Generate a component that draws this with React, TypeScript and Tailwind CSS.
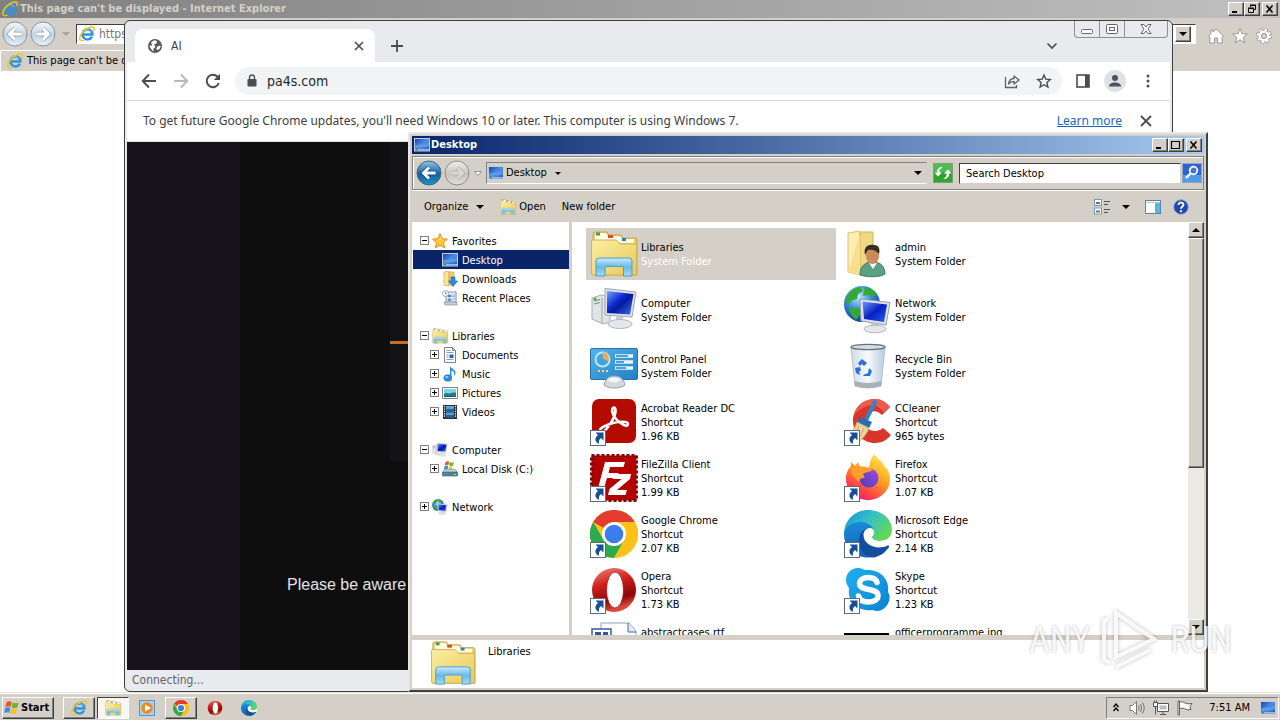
import type { ReactNode } from "react";

const tahoma = "font-[family-name:'DejaVu_Sans_Condensed','Noto_Sans',sans-serif]";
const raised =
  "border border-t-white border-l-white border-r-[#404040] border-b-[#404040] bg-[#d4d0c8] shadow-[inset_-1px_-1px_0_#808080]";

/* ---------- small icons ---------- */

function IeIcon({ className }: { className: string }) {
  return (
    <svg viewBox="0 0 16 16" className={className} aria-hidden="true">
      <path d="M12.9 10.6A5 5 0 1 1 13.4 8.6H4.2" fill="none" stroke="#2f93dc" strokeWidth="2.5" />
      <path d="M4 6.3a4.6 4.6 0 0 1 8.4 0" fill="none" stroke="#8fd0f5" strokeWidth="0.9" />
      <path d="M1.6 14.4C-.6 12.6 2 7 6.500 3.600 10.500.6 15.200-.2 15.200 2.700c0 .9-.3 1.700-.7 2.500" fill="none" stroke="#f3c321" strokeWidth="1.5" />
      <path d="M1.600 14.400c1 .8 2.500.3 3.900-.5" fill="none" stroke="#f3c321" strokeWidth="1.200" />
    </svg>
  );
}

function DesktopIcon({ className }: { className: string }) {
  return (
    <svg viewBox="0 0 16 16" className={className} aria-hidden="true">
      <defs>
        <linearGradient id="desk" x1="0" y1="0" x2="1" y2="1">
          <stop offset="0" stopColor="#173fa5" />
          <stop offset="0.5" stopColor="#4f8fe6" />
          <stop offset="1" stopColor="#1d55b8" />
        </linearGradient>
      </defs>
      <rect x="0.500" y="1.500" width="15" height="12.500" fill="url(#desk)" stroke="#c4cede" />
      <path d="M1 12h14v1.500H1z" fill="#9cb8dc" />
      <path d="M1.500 12h2.500v1.500H1.500z" fill="#3f9a55" />
      <path d="M1 9c4-3 9 1 14-4v4c-5 3-10 0-14 2z" fill="#76b1f2" opacity="0.5" />
    </svg>
  );
}

function LibrariesIcon({ className }: { className: string }) {
  return (
    <svg viewBox="0 0 48 48" className={className} aria-hidden="true">
      <defs>
        <linearGradient id="libF" x1="0" y1="0" x2="1" y2="1">
          <stop offset="0" stopColor="#fbeea2" />
          <stop offset="1" stopColor="#e9c95a" />
        </linearGradient>
        <linearGradient id="libB" x1="0" y1="0" x2="0" y2="1">
          <stop offset="0" stopColor="#c9ecfb" />
          <stop offset="0.5" stopColor="#69b8e8" />
          <stop offset="1" stopColor="#a5daf5" />
        </linearGradient>
      </defs>
      <path d="M3 45V4q0-2 2-2h12l2 3h12l2 3h12q2 0 2 2v35z" fill="#e5cb6c" stroke="#c9a948" />
      <path d="M5 3h11l2 3h12l2 3h12v4H5z" fill="#fffbe6" />
      <path d="M6 2.500h4v3H6z" fill="#43a047" />
      <path d="M18 5h5v3h-5z" fill="#d84b2b" />
      <path d="M32 8h4v3h-4z" fill="#2b7fd0" />
      <path d="M1.500 11q0-1 1.500-1h23l4 4h15q1.500 0 1.500 1.500V45h-43q-2 0-2-2z" fill="url(#libF)" stroke="#d3b250" />
      <path d="M6 46V31q0-3 3-3h30q3 0 3 3v15h-8.500v-8q0-1.500-1.500-1.500H17Q15 36.500 15 38v8z" fill="url(#libB)" stroke="#4c9dcc" />
    </svg>
  );
}

function ComputerIcon({ className }: { className: string }) {
  return (
    <svg viewBox="0 0 48 48" className={className} aria-hidden="true">
      <defs>
        <linearGradient id="scr" x1="0" y1="0" x2="1" y2="1">
          <stop offset="0" stopColor="#7fa2ff" />
          <stop offset="0.4" stopColor="#0d2bd0" />
          <stop offset="0.550" stopColor="#0618a0" />
          <stop offset="1" stopColor="#3c74f0" />
        </linearGradient>
      </defs>
      <path d="M2 12l9-3 9 2v25l-7 2L2 33z" fill="#e1e4e7" stroke="#a8adb3" />
      <path d="M12 12v25" stroke="#9fa5ab" />
      <path d="M4 15l6-1.500M4 18l6-1.500" stroke="#7c8288" />
      <circle cx="5" cy="13" r="1.500" fill="#2fc22f" />
      <path d="M15 2.500l31 3.500-4 25-27-2z" fill="#dfe3e8" stroke="#9da5ae" />
      <path d="M17 5l26.500 3-3.500 20.500-23-1.500z" fill="url(#scr)" />
      <path d="M26 30.500l7 .5v6l-7-1z" fill="#c4c9cf" />
      <ellipse cx="30" cy="38" rx="12" ry="4.500" fill="#e5e8eb" stroke="#b1b7bd" />
    </svg>
  );
}

function NetworkIcon({ className }: { className: string }) {
  return (
    <svg viewBox="0 0 48 48" className={className} aria-hidden="true">
      <defs>
        <radialGradient id="globe" cx="0.4" cy="0.3" r="0.7">
          <stop offset="0" stopColor="#c2e8ff" />
          <stop offset="0.5" stopColor="#3a8ae0" />
          <stop offset="1" stopColor="#0a3f9c" />
        </radialGradient>
        <linearGradient id="nscr" x1="0" y1="0" x2="1" y2="1">
          <stop offset="0" stopColor="#6f97ff" />
          <stop offset="0.5" stopColor="#0920c0" />
          <stop offset="1" stopColor="#2c5ef0" />
        </linearGradient>
      </defs>
      <circle cx="18" cy="18" r="18" fill="url(#globe)" />
      <path d="M2 13C5 5 10 2 16 1l3 4-5 3-1 5-6 2-4 5zM21 1c5 1 10 4 12 8l-5 2-4-2-5 1 1-5zM7 21l7 1 3 5-5 7c-4-3-6-7-7-11z" fill="#35a935" />
      <path d="M16 13l30 3.500-4 22.500-25-4z" fill="#dfe4ea" stroke="#949da8" />
      <path d="M18.500 15.500L43 18.500l-3 17.500-20-3z" fill="url(#nscr)" />
      <path d="M27 37l7 1v4l-7-1z" fill="#c4c9cf" />
      <ellipse cx="31" cy="43" rx="11" ry="3.800" fill="#e5e8eb" stroke="#b1b7bd" />
    </svg>
  );
}

function ChromeIcon({ className }: { className: string }) {
  return (
    <svg viewBox="0 0 48 48" className={className} aria-hidden="true">
      <circle cx="24" cy="24" r="24" fill="#fbc116" />
      <path d="M24 24L3.200 12A24 24 0 0 1 44.800 12H24z" fill="#e33b2e" />
      <path d="M3.200 12A24 24 0 0 0 24 48l10.400-18L24 24 13.600 30z" fill="#2da94f" />
      <path d="M44.800 12A24 24 0 0 1 24 48L34.400 30 24 12z" fill="#fbc116" />
      <circle cx="24" cy="24" r="12" fill="#fff" />
      <circle cx="24" cy="24" r="9.300" fill="#3b7ded" />
    </svg>
  );
}

function OperaIcon({ className }: { className: string }) {
  return (
    <svg viewBox="0 0 48 48" className={className} aria-hidden="true">
      <defs>
        <linearGradient id="opr" x1="0" y1="0" x2="0.3" y2="1">
          <stop offset="0" stopColor="#f48a80" />
          <stop offset="0.4" stopColor="#d2231f" />
          <stop offset="0.800" stopColor="#8c0606" />
          <stop offset="1" stopColor="#d94a3a" />
        </linearGradient>
      </defs>
      <ellipse cx="24" cy="24" rx="22" ry="22" fill="url(#opr)" />
      <ellipse cx="25" cy="24" rx="8.500" ry="18" fill="#fff" stroke="#9b1616" strokeWidth="0.800" />
    </svg>
  );
}

function EdgeIcon({ className }: { className: string }) {
  return (
    <svg viewBox="0 0 48 48" className={className} aria-hidden="true">
      <defs>
        <linearGradient id="edT" x1="0" y1="0" x2="1" y2="0.6">
          <stop offset="0" stopColor="#1a8fd6" />
          <stop offset="0.5" stopColor="#35bfc9" />
          <stop offset="1" stopColor="#62d956" />
        </linearGradient>
        <linearGradient id="edM" x1="0" y1="0" x2="0" y2="1">
          <stop offset="0" stopColor="#1b8bd9" />
          <stop offset="1" stopColor="#0f62b5" />
        </linearGradient>
      </defs>
      <path d="M0 24C0 10 11 0 24 0c14 0 24 9 24 20 0 7-6 11-12 11-5 0-8-2-8-4l-8-4z" fill="url(#edT)" />
      <path d="M0 24c1-8 9-12 16-12 8 0 13 4 14 9-4-3-8 0-9 5 0 9 4 18 11 20.500C15 51 0 40 0 24z" fill="url(#edM)" />
      <path d="M17 23c-6 11 1 24 13 24.500 7-1.500 12-6 15-10.500.5-1-.5-2-1.500-1.500-10 4-20-1-22-8.500-1-4 1-7 4-8.500-4 0-7 2-8.500 4.500z" fill="#124e9c" />
      <path d="M19.500 25c0-4 3-7 6.500-7 4 0 5 4 3.500 7-1 1-1.500 1.500-1.500 2.500 0 2 4 3.500 8 3.500 4 0 8-1 11-4.500 1 2 .500 6-1.500 9.500-1-1.500-2-1-3 0-10 4-23-1-23-11z" fill="#fff" />
    </svg>
  );
}

function StarIcon() {
  return (
    <svg viewBox="0 0 16 16" className="size-4" aria-hidden="true">
      <path d="M8 .8l2.200 4.800 5.200.6-3.900 3.500 1.100 5.200L8 12.300l-4.600 2.600 1.100-5.200L.6 6.200l5.200-.6z" fill="#ffc83a" stroke="#d98218" strokeWidth="0.900" />
      <path d="M8 3l1.300 3.500H5L3 7l5-1z" fill="#fff0a5" />
    </svg>
  );
}
function DownloadsIcon() {
  return (
    <svg viewBox="0 0 16 16" className="size-4" aria-hidden="true">
      <path d="M2 1l5-1v15l-5-1z" fill="#f8e596" stroke="#cda945" strokeWidth="0.700" />
      <path d="M7 1h5v13H7z" fill="#ecd06b" stroke="#cda945" strokeWidth="0.700" />
      <path d="M9 6h4v4h2.500L11 15.500 6.500 10H9z" fill="#2f8be0" stroke="#155fae" strokeWidth="0.600" />
    </svg>
  );
}
function RecentIcon() {
  return (
    <svg viewBox="0 0 16 16" className="size-4" aria-hidden="true">
      <path d="M4 2h10v10H4z" fill="#e8eef6" stroke="#8294a8" />
      <path d="M6 5h3v2H6zM6 9h3v1.500H6zM10 5h3M10 6.500h3M10 9h3" fill="#5a88c0" stroke="#5a88c0" strokeWidth="0.600" />
      <path d="M2 12h13v3H3z" fill="#c3ccd6" stroke="#8b97a4" strokeWidth="0.700" />
      <circle cx="3.500" cy="3.500" r="3" fill="#fff" stroke="#8d98a5" strokeWidth="0.800" />
      <path d="M3.500 1.800v1.900h1.300" fill="none" stroke="#555" strokeWidth="0.700" />
    </svg>
  );
}
function DocumentIcon() {
  return (
    <svg viewBox="0 0 16 16" className="size-4" aria-hidden="true">
      <path d="M2.500.5h8l3 3v12h-11z" fill="#fff" stroke="#7c8590" />
      <path d="M10.500.5v3h3" fill="none" stroke="#7c8590" />
      <path d="M4.500 3.500h4M4.500 5.500h7M4.500 8h2M4.500 10h2M4.500 12.500h7" stroke="#6f94bd" strokeWidth="0.900" />
      <path d="M7.500 7.500h4v3.500h-4z" fill="#1f62b8" />
    </svg>
  );
}
function MusicIcon() {
  return (
    <svg viewBox="0 0 16 16" className="size-4" aria-hidden="true">
      <path d="M8 0c1 3 6 3 5.500 7.500-.2 1-.8 1.800-1.500 2 1-3-1-4.500-2.500-5V12H8z" fill="#2d8fe0" />
      <ellipse cx="5.800" cy="12" rx="4" ry="3.300" fill="#2d8fe0" stroke="#176db8" strokeWidth="0.600" />
      <ellipse cx="4.800" cy="11" rx="1.600" ry="1" fill="#9ad4fa" />
    </svg>
  );
}
function PictureIcon() {
  return (
    <svg viewBox="0 0 16 16" className="size-4" aria-hidden="true">
      <path d="M.5 2.500h15v11H.5z" fill="#fff" stroke="#7d8791" />
      <path d="M2 4h12v8H2z" fill="#7fd0ea" />
      <path d="M2 9c3-2 4 0 6-.5S12 7 14 8v4H2z" fill="#1e7f7a" />
      <path d="M2 11h12v1H2z" fill="#155e89" />
    </svg>
  );
}
function VideoIcon() {
  return (
    <svg viewBox="0 0 16 16" className="size-4" aria-hidden="true">
      <path d="M1 1h14v14H1z" fill="#2a3036" />
      <path d="M4 2h8v5.500H4zM4 8.500h8V14H4z" fill="#5aa5dd" />
      <path d="M4 6c3-3 5 1 8-2v3.500H4zM4 12c3-3 5 1 8-2v4H4z" fill="#285d93" />
      <path d="M2.500 2v12M13.500 2v12" stroke="#fff" strokeWidth="1.200" strokeDasharray="1.200 1.200" />
    </svg>
  );
}
function DiskIcon() {
  return (
    <svg viewBox="0 0 16 16" className="size-4" aria-hidden="true">
      <path d="M3.500 1q2-1.500 3.700-.3l-.8 3.500Q4.500 3.200 2.700 4.500z" fill="#e8502a" />
      <path d="M8 1q2 1 3.800 0L11 4.500q-2 1-3.800 0z" fill="#6cb52d" />
      <path d="M2.500 5.200q2-1.300 3.700-.3L5.500 8.500H1.800z" fill="#3a8fe0" />
      <path d="M7 5.300q2 1 3.800 0l-.8 3.500H6.300z" fill="#f6c02a" />
      <path d="M2.500 8.500h11l2 3H.5z" fill="#c5cdd5" stroke="#7f8a95" strokeWidth="0.600" />
      <path d="M.5 11h15v4H.5z" fill="#4a84a0" stroke="#41606f" strokeWidth="0.600" />
      <path d="M12 13.500h2" stroke="#7ff06a" />
    </svg>
  );
}

/* ---------- large file icons ---------- */

function AdminIcon({ className }: { className: string }) {
  return (
    <svg viewBox="0 0 48 48" className={className} aria-hidden="true">
      <path d="M4 3l12-2v44L4 42z" fill="#fbeeb0" stroke="#dcc067" />
      <path d="M16 2h13v40H16z" fill="#eed883" stroke="#d2b45a" />
      <path d="M4 42l12-38v41z" fill="#f4e08e" />
      <path d="M16 45c0-9 5-13 13-13s12 5 12 12c-7 4-19 3-25 1z" fill="#5aa183" stroke="#3b7a61" />
      <path d="M25 33l4 6 4-6z" fill="#fff" />
      <ellipse cx="28.500" cy="26" rx="6.500" ry="8" fill="#c78b5e" />
      <path d="M21 25c-2-9 4-11 9-10 6 0 6 6 5 9-3-4-7-5-11-4z" fill="#3b2b20" />
    </svg>
  );
}
function ControlPanelIcon({ className }: { className: string }) {
  return (
    <svg viewBox="0 0 48 48" className={className} aria-hidden="true">
      <defs>
        <linearGradient id="cp" x1="0" y1="0" x2="1" y2="1">
          <stop offset="0" stopColor="#54b4ea" />
          <stop offset="1" stopColor="#1f7fc6" />
        </linearGradient>
      </defs>
      <rect x="0.500" y="6.500" width="47" height="31" rx="1.500" fill="url(#cp)" stroke="#2b6fa6" />
      <circle cx="12.500" cy="17.500" r="7" fill="none" stroke="#bfe6fa" strokeWidth="2" />
      <path d="M13 16.500v-7a7.500 7.500 0 0 1 5.500 10z" fill="#f3ac4c" />
      <path d="M25 14h18M25 20h18M25 26h18" stroke="#e6f6ff" strokeWidth="3.600" />
      <path d="M26 14h12M26 20h8M26 26h10" stroke="#2b7fbd" strokeWidth="1.600" />
      <path d="M8 29h2M12 29h2M16 29h2" stroke="#ffd56b" strokeWidth="2" />
      <path d="M14 43c1-6 5-9 10.500-9s9.500 3 10.500 9c-4 4-17 4-21 0z" fill="#d2d7dc" stroke="#9ba3ab" />
      <ellipse cx="24" cy="38" rx="6" ry="2.500" fill="#f4f6f8" />
    </svg>
  );
}
function RecycleIcon({ className }: { className: string }) {
  return (
    <svg viewBox="0 0 48 48" className={className} aria-hidden="true">
      <defs>
        <linearGradient id="bin" x1="0" y1="0" x2="1" y2="0">
          <stop offset="0" stopColor="#cfdbe6" />
          <stop offset="0.5" stopColor="#f7fafc" />
          <stop offset="1" stopColor="#b7cbe0" />
        </linearGradient>
      </defs>
      <path d="M7 5h34l-4 39q-13 4-26 0z" fill="url(#bin)" stroke="#b4c0cc" />
      <path d="M10.500 39q13 4 27 0l-.5 5q-13 4-26 0z" fill="#a8b0b6" />
      <ellipse cx="24" cy="5" rx="17" ry="2.600" fill="#d5dee8" stroke="#67727d" strokeWidth="1.300" />
      <path d="M14 21l4-4 5 4-3 3-2-2-2 2zM11 26l5-1 1 4h-2l1 4-4-2zM19 33l5-2 1-5 3 3-2 5h-6z" fill="#2f6fd8" />
    </svg>
  );
}
function AcrobatIcon({ className }: { className: string }) {
  return (
    <svg viewBox="0 0 48 48" className={className} aria-hidden="true">
      <rect x="2" y="1" width="44" height="44" rx="7" fill="#b30b00" />
      <path d="M10 34c-2-3 5-7 13-9 6-1.500 15-2 15 1 0 4-8 0-12-5-3-4-5-9-3-11s4 2 1 9c-3 7-11 18-14 15z" fill="none" stroke="#fff" strokeWidth="2.600" strokeLinejoin="round" />
    </svg>
  );
}
function CCleanerIcon({ className }: { className: string }) {
  return (
    <svg viewBox="0 0 48 48" className={className} aria-hidden="true">
      <path d="M46 9C42 4 37 1 31 1 18 1 9 11 9 23s10 22 22 22c7 0 12-3 16-8l-8-7c-9 7-19 1-18-8 1-9 11-12 17-5z" fill="#d9352a" />
      <path d="M46 9C42 4 37 1 31 1 20 1 12 8 10 17 22 5 33 4 40 15z" fill="#ec5b4a" />
      <path d="M31 4l-9 18" stroke="#2b86cc" strokeWidth="4" strokeLinecap="round" />
      <path d="M16 19l12 5-3 6-12-5z" fill="#256fae" />
      <path d="M13 24l12 6c-3 8-9 14-16 16L2 37c5-2 9-6 11-13z" fill="#ecd3a5" stroke="#cfa863" />
      <path d="M15 28c-2 6-5 9-8 12M20 30c-2 6-5 10-8 13" fill="none" stroke="#cfa863" />
    </svg>
  );
}
function FileZillaIcon({ className }: { className: string }) {
  return (
    <svg viewBox="0 0 48 48" className={className} aria-hidden="true">
      <rect x="1.500" y="1.500" width="45" height="45" fill="#b30000" stroke="#7c0b0b" strokeWidth="3" strokeDasharray="3 2" />
      <path d="M15 8h20l-1.500 5H20l-1.500 6h10l-1.500 5H17l-4 14H7z" fill="#fff" />
      <path d="M24 20h17l-1 5-13 11h10l-1.500 5H18l1.500-6 12-10h-9z" fill="#fff" />
    </svg>
  );
}
function FirefoxIcon({ className }: { className: string }) {
  return (
    <svg viewBox="0 0 48 48" className={className} aria-hidden="true">
      <defs>
        <linearGradient id="ff" x1="0.8" y1="0" x2="0.2" y2="1">
          <stop offset="0" stopColor="#fff04a" />
          <stop offset="0.450" stopColor="#ff9a20" />
          <stop offset="0.8" stopColor="#ff3a4a" />
          <stop offset="1" stopColor="#e01580" />
        </linearGradient>
        <linearGradient id="ffp" x1="1" y1="0" x2="0" y2="1">
          <stop offset="0" stopColor="#a04be8" />
          <stop offset="1" stopColor="#4a3bb5" />
        </linearGradient>
      </defs>
      <path d="M30 0c2 4 8 6 11 13 4 3 5 8 5 12 0 12-10 21-22 21S2 37 2 25c0-6 2-10 5-13v-4l4 4 3-4 2 5c4-1 7 0 9 1 1-6 2-10 5-14z" fill="url(#ff)" />
      <circle cx="25" cy="24" r="9.500" fill="url(#ffp)" />
      <path d="M6 14c6-3 17-1 23 2-3 2-7 2-10 4 1 2 2 3 1 4-3 0-5 1-5 4-4-3-8-8-9-14z" fill="#ff9d2b" />
    </svg>
  );
}
function SkypeIcon({ className }: { className: string }) {
  return (
    <svg viewBox="0 0 48 48" className={className} aria-hidden="true">
      <defs>
        <linearGradient id="sky" x1="0" y1="0" x2="1" y2="1">
          <stop offset="0" stopColor="#1fb0f0" />
          <stop offset="1" stopColor="#0a83d0" />
        </linearGradient>
      </defs>
      <path d="M14 2c4 0 6 2 8 2 14-1 24 9 22 22 2 3 2 6 1 9-2 7-9 12-16 9C14 46 3 36 5 22 3 19 2 17 2 14 2 7 7 2 14 2z" fill="url(#sky)" />
      <path d="M33 16.500c-1-4-5-5-9-5s-8.500 2-8.500 6C15.500 26 34 21 34 29.500c0 4.500-4.500 6.500-9.500 6.500s-9-2-10-6" fill="none" stroke="#fff" strokeWidth="5.500" strokeLinecap="round" />
    </svg>
  );
}
function RtfIcon({ className }: { className: string }) {
  return (
    <svg viewBox="0 0 48 48" className={className} aria-hidden="true">
      <path d="M11 1h28l7 8v38H11z" fill="#fff" stroke="#8fa1bd" />
      <path d="M38 1v9h8" fill="#e2eaf5" stroke="#4466a8" />
      <path d="M2 7h19v14H2z" fill="#fff" stroke="#3658a3" strokeWidth="1.500" />
      <path d="M5 10h6v8H5zM13 10h5v8h-5z" fill="#3658a3" />
    </svg>
  );
}
function PhotoIcon({ className }: { className: string }) {
  return (
    <svg viewBox="0 0 48 48" className={className} aria-hidden="true">
      <path d="M0 11h45v27H0z" fill="#000" />
    </svg>
  );
}

/* ---------- shared controls ---------- */

function Caret({ className }: { className: string }) {
  return (
    <svg viewBox="0 0 8 4" className={className} aria-hidden="true">
      <path d="M0 0h8L4 4z" fill="currentColor" />
    </svg>
  );
}

function CaptionButton({ label, children }: { label: string; children: ReactNode }) {
  return (
    <button aria-label={label} className={`${raised} flex h-3.5 w-4 items-center justify-center`}>
      <svg viewBox="0 0 12 10" className="h-2.5 w-3" fill="none" stroke="#000" aria-hidden="true">
        {children}
      </svg>
    </button>
  );
}

function NavCircle({ label, tone, flip }: { label: string; tone: "blue" | "pale" | "gray"; flip?: boolean }) {
  const stops = {
    blue: ["#8ec4e6", "#15609c", "#1a94cf", "#fff", "#47667c"],
    pale: ["#f5f9fb", "#c3d2de", "#e4f2fa", "#fff", "#8397a6"],
    gray: ["#f1efec", "#c5c2bd", "#e3e1dd", "#d9d6d1", "#8e8c88"],
  }[tone];
  const arrow = flip ? "M6.500 13h12M13 7.500l5.500 5.500-5.500 5.500" : "M19.500 13h-12M13 7.500L7.500 13l5.500 5.500";
  return (
    <button aria-label={label} className="shrink-0">
      <svg viewBox="0 0 26 26" className="size-[26px]" fill="none" aria-hidden="true">
        <defs>
          <linearGradient id={`nav-${tone}`} x1="0" y1="0" x2="0" y2="1">
            <stop offset="0" stopColor={stops[0]} />
            <stop offset="0.550" stopColor={stops[1]} />
            <stop offset="1" stopColor={stops[2]} />
          </linearGradient>
        </defs>
        <circle cx="13" cy="13" r="12" fill={`url(#nav-${tone})`} stroke={stops[4]} />
        <path d={arrow} stroke={tone === "gray" ? "#b5b2ad" : tone === "pale" ? "#8fa3b3" : "#0c4676"} strokeWidth="4.500" />
        <path d={arrow} stroke={stops[3]} strokeWidth="3" />
      </svg>
    </button>
  );
}

/* ---------- Internet Explorer ---------- */

function InternetExplorer() {
  return (
    <section className="flex min-h-0 flex-1 flex-col bg-white text-[11px]" aria-label="Internet Explorer">
      <header className="flex h-[18px] shrink-0 items-center justify-between bg-linear-to-r from-[#808080] to-[#c0c0c0] px-0.5">
        <div className="flex items-center gap-0.5 font-bold text-[#d4d0c8]">
          <IeIcon className="size-4" />
          <h1 className="whitespace-nowrap">This page can&apos;t be displayed - Internet Explorer</h1>
        </div>
        <div className="flex">
          <CaptionButton label="Minimize">
            <path d="M2 8h5" strokeWidth="2" />
          </CaptionButton>
          <CaptionButton label="Restore">
            <path d="M4.500 3V1.500h5v4H8M4 1h6M2.500 4.500h5v4h-5zM2 4h6" />
          </CaptionButton>
          <span className="w-0.5" />
          <CaptionButton label="Close">
            <path d="M2.500 1.500l6 7M8.500 1.500l-6 7" strokeWidth="1.600" />
          </CaptionButton>
        </div>
      </header>
      <div className="flex h-8 shrink-0 items-center bg-[#d4d0c8] pl-0.5 pr-2">
        <NavCircle label="Back" tone="pale" />
        <span className="w-0.5" />
        <NavCircle label="Forward" tone="pale" flip />
        <Caret className="mx-1.5 h-1 w-2 text-[#a8a49c]" />
        <label className="flex h-5 flex-1 items-center gap-1 border border-[#fff] border-l-[#404040] border-t-[#404040] bg-white pl-0.5">
          <IeIcon className="size-4" />
          <input aria-label="Address" defaultValue="https://" className="min-w-0 flex-1 text-[12px] text-[#777] outline-none" />
          <button aria-label="Show address list" className={`${raised} mr-1 flex size-4 items-center justify-center`}>
            <Caret className="h-1 w-2" />
          </button>
        </label>
        <div className="ml-3 flex items-center gap-2 pt-1">
          <button aria-label="Home">
            <svg viewBox="0 0 16 16" className="size-4" aria-hidden="true">
              <path d="M8 1l7.500 7-1.500 1.300V15H9.500v-5h-3v5H2V9.300L.5 8 3 5.700V2h2v2z" fill="#fff" stroke="#8b877f" strokeWidth="0.800" />
            </svg>
          </button>
          <button aria-label="Favorites">
            <svg viewBox="0 0 16 16" className="size-4" aria-hidden="true">
              <path d="M8 .5l2 5.200 5.500.2-4.300 3.500L12.700 15 8 11.800 3.300 15l1.500-5.600L.5 5.900 6 5.700z" fill="#fff" stroke="#8b877f" strokeWidth="0.800" />
            </svg>
          </button>
          <button aria-label="Tools">
            <svg viewBox="0 0 16 16" className="size-4" fill="none" aria-hidden="true">
              <circle cx="8" cy="8" r="6.200" stroke="#8b877f" strokeWidth="3.400" strokeDasharray="2.700 2.170" />
              <circle cx="8" cy="8" r="4.200" stroke="#8b877f" strokeWidth="4" />
              <circle cx="8" cy="8" r="6.200" stroke="#fff" strokeWidth="2.200" strokeDasharray="2.200 2.670" />
              <circle cx="8" cy="8" r="4.200" stroke="#fff" strokeWidth="2.600" />
            </svg>
          </button>
        </div>
      </div>
      <div className="flex h-[21px] shrink-0 items-center bg-[#d4d0c8]">
        <button className="flex h-full w-60 items-center gap-1 border-l border-t border-white pl-1.5">
          <IeIcon className="size-4" />
          <span className="whitespace-nowrap">This page can&apos;t be displayed</span>
        </button>
      </div>
      <div className="flex-1 bg-white" />
    </section>
  );
}

/* ---------- Google Chrome ---------- */

function ChromeWindow() {
  return (
    <section
      aria-label="Google Chrome"
      className="absolute bottom-7 left-[124px] right-[107px] top-5 flex flex-col rounded-md border border-[#3c3f43] bg-[#e8eaed] px-0.5 text-[12px] text-[#3c4043]"
    >
      <header className="flex h-[41px] shrink-0 items-end justify-between pl-2">
        <div className="flex items-end">
          <div className="flex h-[33px] w-60 items-center gap-2 rounded-t-lg bg-white pl-3 pr-2.5">
            <svg viewBox="0 0 16 16" className="size-4" aria-hidden="true">
              <circle cx="8" cy="8" r="7" fill="#55595e" />
              <path d="M4 4.500l3-2.300 3 .8-.5 2.500-2.500 1L8.500 9l-2 1.500v3L4 11 2.300 7.800l3-.3zM10 9l2.500-1.500 1.300.8-1.500 3-2 .7-1-1.500z" fill="#fff" />
            </svg>
            <span className="flex-1">AI</span>
            <button aria-label="Close tab">
              <svg viewBox="0 0 12 12" className="size-3" stroke="#4a4d51" strokeWidth="1.700" aria-hidden="true">
                <path d="M2 2l8 8M10 2l-8 8" />
              </svg>
            </button>
          </div>
          <button aria-label="New tab" className="mb-2.5 ml-4">
            <svg viewBox="0 0 12 12" className="size-3" stroke="#4a4d51" strokeWidth="1.800" aria-hidden="true">
              <path d="M6 0v12M0 6h12" />
            </svg>
          </button>
        </div>
        <div className="flex self-stretch">
          <button aria-label="Search tabs" className="mr-4 mt-2">
            <svg viewBox="0 0 12 8" className="h-2 w-3" fill="none" stroke="#4a4d51" strokeWidth="1.700" aria-hidden="true">
              <path d="M1.500 1.500L6 6l4.500-4.500" />
            </svg>
          </button>
          <div className="mr-0.5 flex h-[17px] divide-x divide-[#8d9094] rounded-b border border-t-0 border-[#8d9094]">
            <button aria-label="Minimize window" className="flex w-[25px] items-center justify-center">
              <svg viewBox="0 0 12 12" className="size-3" fill="#fff" stroke="#62666b" aria-hidden="true">
                <rect x="0.500" y="6.500" width="11" height="4" rx="1" />
              </svg>
            </button>
            <button aria-label="Maximize window" className="flex w-[25px] items-center justify-center">
              <svg viewBox="0 0 12 12" className="size-3" fill="#fff" stroke="#62666b" aria-hidden="true">
                <rect x="0.500" y="1.500" width="11" height="9" rx="1" />
                <rect x="3.500" y="4.500" width="5" height="3" />
              </svg>
            </button>
            <button aria-label="Close window" className="flex w-[42px] items-center justify-center">
              <svg viewBox="0 0 12 12" className="size-3" fill="#fff" stroke="#62666b" aria-hidden="true">
                <path d="M1 1.500h3L6 4l2-2.500h3L8 6l3 4.500H8L6 8l-2 2.500H1L4 6z" />
              </svg>
            </button>
          </div>
        </div>
      </header>

      <div className="flex h-[39px] shrink-0 items-center border-b border-[#d5d7da] bg-white px-3.5">
        <div className="flex items-center gap-4 pr-3.5">
          <button aria-label="Back">
            <svg viewBox="0 0 16 16" className="size-4" fill="none" stroke="#4a4d51" strokeWidth="1.900" aria-hidden="true">
              <path d="M15 8H2M8 1.500L1.700 8 8 14.500" />
            </svg>
          </button>
          <button aria-label="Forward">
            <svg viewBox="0 0 16 16" className="size-4" fill="none" stroke="#b6b8bb" strokeWidth="1.900" aria-hidden="true">
              <path d="M1 8h13M8 1.500L14.300 8 8 14.500" />
            </svg>
          </button>
          <button aria-label="Reload">
            <svg viewBox="0 0 16 16" className="size-4" fill="none" stroke="#4a4d51" strokeWidth="2" aria-hidden="true">
              <path d="M13.800 10A6.200 6.200 0 1 1 12.500 3.700L14 5.200" />
              <path d="M15 .8V7H8.800z" fill="#4a4d51" stroke="none" />
            </svg>
          </button>
        </div>
        <div className="flex h-7 flex-1 items-center gap-2.5 rounded-full bg-[#f1f3f4] pl-3 pr-2.5">
          <svg viewBox="0 0 10 14" className="h-3.5 w-2.5" aria-hidden="true">
            <rect x="0.500" y="5" width="9" height="7.500" rx="1" fill="#4a4d51" />
            <path d="M2.500 5V3.500a2.500 2.500 0 0 1 5 0V5" fill="none" stroke="#4a4d51" strokeWidth="1.300" />
          </svg>
          <input aria-label="Address and search bar" defaultValue="pa4s.com" className="min-w-0 flex-1 bg-transparent text-[14px] text-[#26282b] outline-none" />
          <button aria-label="Share this page" className="mr-1.5">
            <svg viewBox="0 0 16 16" className="size-4" fill="none" stroke="#5f6368" strokeWidth="1.300" aria-hidden="true">
              <path d="M1.500 4v10.500h11V12" />
              <path d="M4.500 11c.5-4 3-5.500 5.500-5.500V3l5 4-5 4V8.500c-2 0-4 .5-5.500 2.500z" strokeLinejoin="round" />
            </svg>
          </button>
          <button aria-label="Bookmark this tab">
            <svg viewBox="0 0 16 16" className="size-4" fill="none" stroke="#4a4d51" strokeWidth="1.400" aria-hidden="true">
              <path d="M8 2l1.800 4.200 4.500.4-3.400 3 1 4.400L8 11.700 4.100 14l1-4.400-3.400-3 4.500-.4z" />
            </svg>
          </button>
        </div>
        <div className="flex items-center gap-3.5 pl-3.5">
          <button aria-label="Side panel">
            <svg viewBox="0 0 14 14" className="size-3.5" aria-hidden="true">
              <rect x="1" y="1" width="12" height="12" fill="#fff" stroke="#4a4d51" strokeWidth="1.600" />
              <path d="M9 1h4v12H9z" fill="#4a4d51" />
            </svg>
          </button>
          <button aria-label="Profile" className="flex size-[22px] items-center justify-center rounded-full bg-[#dee1e6]">
            <svg viewBox="0 0 14 14" className="size-3.5" fill="#4d5358" aria-hidden="true">
              <circle cx="7" cy="4" r="3" />
              <path d="M1 12.500C1 9.500 4 8.500 7 8.500s6 1 6 4z" />
            </svg>
          </button>
          <button aria-label="Chrome menu" className="px-1.5">
            <svg viewBox="0 0 4 14" className="h-3.5 w-1" fill="#4a4d51" aria-hidden="true">
              <circle cx="2" cy="2" r="1.500" />
              <circle cx="2" cy="7" r="1.500" />
              <circle cx="2" cy="12" r="1.500" />
            </svg>
          </button>
        </div>
      </div>

      <div className="flex h-[41px] shrink-0 items-center border-b border-[#e3e3e3] bg-white pl-4 pr-[18px] font-[family-name:'Noto_Sans',sans-serif]">
        <p className="flex-1 whitespace-nowrap">
          To get future Google Chrome updates, you&apos;ll need Windows 10 or later. This computer is using Windows 7.
        </p>
        <a href="#learn" className="mr-[18px] text-[#1a66c2] underline">
          Learn more
        </a>
        <button aria-label="Dismiss">
          <svg viewBox="0 0 12 12" className="size-3" stroke="#4a4d51" strokeWidth="1.800" aria-hidden="true">
            <path d="M1 1l10 10M11 1L1 11" />
          </svg>
        </button>
      </div>

      <main className="flex min-h-0 flex-1 bg-[#0e0e0e]">
        <div className="w-[113px] shrink-0 bg-[#17131a]" />
        <div className="flex w-[150px] shrink-0 flex-col justify-end pb-[75px] pl-[47px]">
          <p className="whitespace-nowrap font-[family-name:'Liberation_Sans',sans-serif] text-[16px] leading-5 text-[#e3e3e3]">
            Please be aware
          </p>
        </div>
        <div className="flex h-[320px] flex-1 flex-col bg-[#131214] pt-[199px]">
          <div className="h-[3px] bg-[#c96f2c]" />
        </div>
      </main>
      <footer className="flex h-[21px] shrink-0 items-center pb-0.5 pl-[5px] text-[#5f6368]">Connecting...</footer>
    </section>
  );
}

/* ---------- Explorer ---------- */

type TreeItem = { label: string; icon: ReactNode; mark?: "+"; selected?: boolean };
type TreeGroup = { label: string; icon: ReactNode; mark: "+" | "-"; items: TreeItem[] };

const tree: TreeGroup[] = [
  {
    label: "Favorites",
    icon: <StarIcon />,
    mark: "-",
    items: [
      { label: "Desktop", icon: <DesktopIcon className="size-4" />, selected: true },
      { label: "Downloads", icon: <DownloadsIcon /> },
      { label: "Recent Places", icon: <RecentIcon /> },
    ],
  },
  {
    label: "Libraries",
    icon: <LibrariesIcon className="size-4" />,
    mark: "-",
    items: [
      { label: "Documents", icon: <DocumentIcon />, mark: "+" },
      { label: "Music", icon: <MusicIcon />, mark: "+" },
      { label: "Pictures", icon: <PictureIcon />, mark: "+" },
      { label: "Videos", icon: <VideoIcon />, mark: "+" },
    ],
  },
  {
    label: "Computer",
    icon: <ComputerIcon className="size-4" />,
    mark: "-",
    items: [{ label: "Local Disk (C:)", icon: <DiskIcon />, mark: "+" }],
  },
  { label: "Network", icon: <NetworkIcon className="size-4" />, mark: "+", items: [] },
];

type Entry = { name: string; kind?: string; size?: string; icon: ReactNode; selected?: boolean };

const big = "size-12";
const entries: Entry[] = [
  { name: "Libraries", kind: "System Folder", icon: <LibrariesIcon className={big} />, selected: true },
  { name: "admin", kind: "System Folder", icon: <AdminIcon className={big} /> },
  { name: "Computer", kind: "System Folder", icon: <ComputerIcon className={big} /> },
  { name: "Network", kind: "System Folder", icon: <NetworkIcon className={big} /> },
  { name: "Control Panel", kind: "System Folder", icon: <ControlPanelIcon className={big} /> },
  { name: "Recycle Bin", kind: "System Folder", icon: <RecycleIcon className={big} /> },
  { name: "Acrobat Reader DC", kind: "Shortcut", size: "1.96 KB", icon: <AcrobatIcon className={big} /> },
  { name: "CCleaner", kind: "Shortcut", size: "965 bytes", icon: <CCleanerIcon className={big} /> },
  { name: "FileZilla Client", kind: "Shortcut", size: "1.99 KB", icon: <FileZillaIcon className={big} /> },
  { name: "Firefox", kind: "Shortcut", size: "1.07 KB", icon: <FirefoxIcon className={big} /> },
  { name: "Google Chrome", kind: "Shortcut", size: "2.07 KB", icon: <ChromeIcon className={big} /> },
  { name: "Microsoft Edge", kind: "Shortcut", size: "2.14 KB", icon: <EdgeIcon className={big} /> },
  { name: "Opera", kind: "Shortcut", size: "1.73 KB", icon: <OperaIcon className={big} /> },
  { name: "Skype", kind: "Shortcut", size: "1.23 KB", icon: <SkypeIcon className={big} /> },
  { name: "abstractcases.rtf", icon: <RtfIcon className={big} /> },
  { name: "officerprogramme.jpg", icon: <PhotoIcon className={big} /> },
];

function Expander({ mark }: { mark?: "+" | "-" }) {
  if (!mark) return <span className="size-[9px]" />;
  return (
    <svg viewBox="0 0 9 9" className="size-[9px]" aria-hidden="true">
      <rect x="0.500" y="0.500" width="8" height="8" fill="#fff" stroke="#808080" />
      <path d={mark === "+" ? "M2 4.500h5M4.500 2v5" : "M2 4.500h5"} stroke="#000" />
    </svg>
  );
}

function FileEntry({ entry }: { entry: Entry }) {
  return (
    <button className={`flex h-[52px] items-center gap-[3px] pl-1 text-left ${entry.selected ? "bg-[#d4d0c8]" : ""}`}>
      <span className="relative shrink-0">
        {entry.icon}
        {entry.kind === "Shortcut" && (
          <svg viewBox="0 0 16 16" className="absolute bottom-0 left-0 size-4" aria-hidden="true">
            <rect x="0.500" y="0.500" width="15" height="15" fill="#fff" stroke="#5d6b7a" />
            <path d="M5.500 2.500h8v8l-2.500-2.500c-2 1.500-2.500 3-2 6-4-2-5-5.500-1-9z" fill="#174e96" />
          </svg>
        )}
      </span>
      <span className={`flex flex-col whitespace-nowrap leading-[14px] ${entry.kind ? "pt-0.5" : "self-start pt-1.5"}`}>
        <span>{entry.name}</span>
        {entry.kind && <span className={entry.selected ? "text-white" : ""}>{entry.kind}</span>}
        {entry.size && <span>{entry.size}</span>}
      </span>
    </button>
  );
}

function ExplorerWindow() {
  return (
    <section
      aria-label="Desktop folder"
      className="absolute bottom-7 left-[408px] right-[72px] top-[132px] flex flex-col border-2 border-b-[#404040] border-l-[#e8e6e0] border-r-[#404040] border-t-[#e8e6e0] bg-[#d4d0c8] p-0.5 text-[11px] text-black"
    >
      <header className="flex h-[18px] shrink-0 items-center justify-between bg-linear-to-r from-[#0a246a] to-[#a6caf0] px-0.5">
        <div className="flex items-center gap-px font-bold text-white">
          <DesktopIcon className="size-4" />
          <h2>Desktop</h2>
        </div>
        <div className="flex">
          <CaptionButton label="Minimize">
            <path d="M2 8h5" strokeWidth="2" />
          </CaptionButton>
          <CaptionButton label="Maximize">
            <path d="M1.500 1v7.500h8V1M1 1.500h9" strokeWidth="1.200" />
          </CaptionButton>
          <span className="w-0.5" />
          <CaptionButton label="Close">
            <path d="M2.500 1.500l6 7M8.500 1.500l-6 7" strokeWidth="1.600" />
          </CaptionButton>
        </div>
      </header>

      <div className="mt-0.5 flex h-[34px] shrink-0 items-center border border-[#808080] shadow-[inset_1px_1px_0_#fff,0_1px_0_#fff] pl-[3px] pr-px">
        <NavCircle label="Back" tone="blue" />
        <span className="w-0.5" />
        <NavCircle label="Forward" tone="gray" flip />
        <button aria-label="Recent locations" className="mx-1">
          <svg viewBox="0 0 8 5" className="h-[5px] w-2" aria-hidden="true">
            <path d="M.5.500h7L4 4.500z" fill="#fff" stroke="#808080" strokeWidth="0.800" />
          </svg>
        </button>
        <div className="flex h-[22px] flex-1 items-center border border-b-white border-l-[#808080] border-r-[#d4d0c8] border-t-[#808080] pl-px pr-1">
          <DesktopIcon className="size-4" />
          <button className="ml-0.5 flex items-center gap-2">
            Desktop <Caret className="h-[3px] w-1.5" />
          </button>
          <span className="flex-1" />
          <button aria-label="Previous locations">
            <Caret className="h-1 w-2" />
          </button>
        </div>
        <button aria-label="Refresh" className="mx-1.5 shrink-0">
          <svg viewBox="0 0 20 20" className="size-5" aria-hidden="true">
            <rect x="0.500" y="0.500" width="19" height="19" fill="#2fa52f" stroke="#7f9c7f" />
            <path d="M1 1h18v8H1z" fill="#6cc96c" opacity="0.6" />
            <path d="M9.500 4L6.500 7v2.500H9l-4 4-3.500-4H4V7l3-3z" fill="#fff" />
            <path d="M10.500 16l3-3v-2.500H11l4-4 3.500 4H16V13l-3 3z" fill="#fff" />
          </svg>
        </button>
        <input
          aria-label="Search Desktop"
          placeholder="Search Desktop"
          className="h-[21px] w-[222px] border border-b-[#d4d0c8] border-l-[#404040] border-r-[#d4d0c8] border-t-[#404040] bg-white pl-1.5 placeholder:text-black"
        />
        <button aria-label="Search" className="ml-px">
          <svg viewBox="0 0 20 20" className="size-5" aria-hidden="true">
            <rect x="0.500" y="0.500" width="19" height="19" fill="#2f63d2" stroke="#8fa5c8" />
            <path d="M1 12h18v7H1z" fill="#58b3ee" opacity="0.7" />
            <circle cx="11.500" cy="7.500" r="3.800" fill="#3d74dd" stroke="#fff" strokeWidth="1.800" />
            <path d="M8.500 10.500L4 15" stroke="#fff" strokeWidth="2.400" />
          </svg>
        </button>
      </div>

      <div className="flex h-8 shrink-0 items-center pl-3 pr-[15px] pt-px">
        <button className="flex items-center gap-2">
          Organize <Caret className="h-1 w-2" />
        </button>
        <button className="ml-4 flex items-center gap-[3px]">
          <LibrariesIcon className="size-4" /> Open
        </button>
        <button className="ml-4">New folder</button>
        <span className="flex-1" />
        <button aria-label="Change your view" className="flex items-center gap-3">
          <svg viewBox="0 0 16 16" className="size-4" aria-hidden="true">
            <rect x="0.500" y="0.500" width="7" height="6" fill="#fff" stroke="#7f95ad" />
            <rect x="0.500" y="9" width="7" height="6" fill="#fff" stroke="#7f95ad" />
            <path d="M2 3h4v2H2z" fill="#3a78b8" />
            <path d="M2 11.500h4v2H2z" fill="#4a8f5a" />
            <path d="M10 2.500h6M10 5.500h4M10 10.500h6M10 13.500h4" stroke="#4a5866" />
          </svg>
          <Caret className="h-1 w-2" />
        </button>
        <button aria-label="Show the preview pane" className="ml-[15px]">
          <svg viewBox="0 0 16 16" className="size-4" aria-hidden="true">
            <rect x="0.500" y="1.500" width="15" height="13" fill="#fff" stroke="#5d83a8" />
            <path d="M10 4h5v10h-5z" fill="#57b9d8" />
            <path d="M1 3.500h14" stroke="#b5cbe0" />
          </svg>
        </button>
        <button aria-label="Get help" className="ml-3">
          <svg viewBox="0 0 16 16" className="size-4" aria-hidden="true">
            <circle cx="8" cy="8" r="7.300" fill="#2549a8" stroke="#8ea4d8" />
            <path d="M5.500 6c0-3.500 5-3 5-.3C10.500 7.500 8 7.500 8 9.700" fill="none" stroke="#fff" strokeWidth="1.800" />
            <circle cx="8" cy="12.200" r="1.100" fill="#fff" />
          </svg>
        </button>
      </div>

      <div className="flex min-h-0 flex-1 bg-white">
        <nav aria-label="Folders" className="flex w-[157px] shrink-0 flex-col gap-[19px] pl-px pt-[9px]">
          {tree.map((group) => (
            <div key={group.label} className="flex flex-col">
              <button className="flex h-[19px] items-center pl-[7px]">
                <Expander mark={group.mark} />
                <span className="w-[3px]" />
                {group.icon}
                <span className="pl-1 pt-0.5">{group.label}</span>
              </button>
              {group.items.map((item) => (
                <button
                  key={item.label}
                  className={`flex h-[19px] items-center pl-[17px] ${item.selected ? "bg-[#0a246a] text-white" : ""}`}
                >
                  <Expander mark={item.mark} />
                  <span className="w-[3px]" />
                  {item.icon}
                  <span className="whitespace-nowrap pl-1 pt-0.5">{item.label}</span>
                </button>
              ))}
            </div>
          ))}
        </nav>
        <div className="w-[3px] shrink-0 bg-[#d4d0c8]" />
        <div className="grid min-w-0 flex-1 auto-rows-[52px] grid-cols-[250px_250px] gap-1 overflow-hidden pl-3.5 pt-1.5">
          {entries.map((entry) => (
            <FileEntry key={entry.name} entry={entry} />
          ))}
        </div>
        <div className="flex w-4 shrink-0 flex-col bg-[#ebe9e4]">
          <button aria-label="Scroll up" className={`${raised} flex h-4 shrink-0 items-center justify-center`}>
            <Caret className="h-1 w-2 rotate-180" />
          </button>
          <div className={`${raised} h-[230px] shrink-0`} />
          <div className="flex-1" />
          <button aria-label="Scroll down" className={`${raised} flex h-4 shrink-0 items-center justify-center`}>
            <Caret className="h-1 w-2" />
          </button>
        </div>
      </div>

      <footer className="flex h-[53px] shrink-0 items-start gap-3 overflow-hidden border-t-[5px] border-[#d4d0c8] bg-white pl-[18px]">
        <LibrariesIcon className="size-[46px]" />
        <span className="pt-[5px]">Libraries</span>
      </footer>
    </section>
  );
}

/* ---------- Taskbar ---------- */

function Taskbar() {
  const flat = "flex h-[22px] w-8 items-center justify-center";
  return (
    <footer className="flex h-7 shrink-0 items-center border-t border-[#e6e2d8] bg-[#d4d0c8] pt-0.5 pl-0.5 pr-px text-[11px] shadow-[inset_0_1px_0_#fff]">
      <button className={`${raised} flex h-[22px] w-[52px] items-center gap-px pl-px font-bold`}>
        <svg viewBox="0 0 16 16" className="size-4" aria-hidden="true">
          <path d="M2.500 2.500Q5 .5 7.500 2L6.500 7Q4 5.500 1.300 7z" fill="#e8502a" />
          <path d="M8.500 2.500q3 1.500 6 0l-1.200 5q-3 1.500-5.800 0z" fill="#6cb52d" />
          <path d="M1.200 8Q4 6.500 6.300 8l-1 5Q3 11.500.2 13z" fill="#3a8fe0" />
          <path d="M7.300 8.500q3 1.500 5.800 0l-1.200 5q-3 1.500-5.600 0z" fill="#f6c02a" />
        </svg>
        Start
      </button>
      <div className="ml-[9px] flex items-center gap-0.5">
        <button aria-label="Internet Explorer" className={`${raised} ${flat}`}>
          <IeIcon className="size-4" />
        </button>
        <button aria-label="Windows Explorer" className={`${flat} border border-b-white border-l-[#404040] border-r-white border-t-[#404040] bg-[#f7f6f3]`}>
          <LibrariesIcon className="size-4" />
        </button>
        <button aria-label="Windows Media Player" className={flat}>
          <svg viewBox="0 0 16 16" className="size-4" aria-hidden="true">
            <rect x="0.500" y="0.500" width="15" height="15" fill="#a9d0f0" stroke="#5b93c9" />
            <circle cx="8" cy="8" r="5.800" fill="#f08a1c" />
            <path d="M6 4.500L12 8l-6 3.500z" fill="#fff" />
          </svg>
        </button>
        <button aria-label="Google Chrome" className={`${raised} ${flat}`}>
          <ChromeIcon className="size-4" />
        </button>
        <button aria-label="Opera" className={flat}>
          <OperaIcon className="size-4" />
        </button>
        <button aria-label="Microsoft Edge" className={flat}>
          <EdgeIcon className="size-4" />
        </button>
      </div>
      <div className="ml-auto flex h-[22px] items-center border border-b-white border-l-[#808080] border-r-white border-t-[#808080] pl-1.5 pr-0.5">
        <button aria-label="Show hidden icons">
          <svg viewBox="0 0 6 9" className="h-[9px] w-1.5" fill="none" stroke="#000" strokeWidth="1.300" aria-hidden="true">
            <path d="M.5 4L3 1l2.500 3M.5 8L3 5l2.500 3" />
          </svg>
        </button>
        <button aria-label="Volume" className="ml-2.5">
          <svg viewBox="0 0 16 16" className="size-4" fill="#fff" stroke="#6b6b6b" strokeWidth="0.900" aria-hidden="true">
            <path d="M1 5.500h2.500L7.500 1.500v13l-4-4H1z" />
            <path d="M9.500 5.500q1.500 2.500 0 5M11.500 4q2.500 4 0 8M13.500 2.500q3.500 5.500 0 11" fill="none" />
          </svg>
        </button>
        <button aria-label="Network status" className="ml-2">
          <svg viewBox="0 0 16 16" className="size-4" fill="#fff" stroke="#555" aria-hidden="true">
            <path d="M4.500 3.500h11v8h-11zM7 14.500h6M10 12v2" />
            <path d="M6.500 5.500h7v4h-7z" fill="#b9bcc0" stroke="none" />
            <path d="M.5 2.500h4v4h-4zM1.500.5v2M3.500.5v2M2.500 6.500v8" />
          </svg>
        </button>
        <button aria-label="Action Center" className="ml-2">
          <svg viewBox="0 0 16 16" className="size-4" fill="#fff" stroke="#555" strokeWidth="0.900" aria-hidden="true">
            <path d="M1 1h1.500v14H1z" />
            <path d="M2.500 2q3-1 5.500 1 3 1.500 7 .5l-2 3 1 3q-4 1-6.500-.8-2-1-5-.2z" />
          </svg>
        </button>
        <time className="ml-4">7:51 AM</time>
        <button aria-label="Show desktop" className="ml-2.5">
          <DesktopIcon className="size-4" />
        </button>
      </div>
    </footer>
  );
}

function Watermark() {
  return (
    <div
      aria-hidden="true"
      className="pointer-events-none absolute bottom-12 right-12 flex items-center gap-2 font-[family-name:'Roboto_Condensed','Liberation_Sans_Narrow','Liberation_Sans',sans-serif] text-[36px] leading-none text-white/85 [text-shadow:0_0_3px_rgb(0_0_0/0.3)]"
    >
      ANY
      <svg viewBox="0 0 64 64" className="size-16" fill="none" stroke="#fff" strokeOpacity="0.85" strokeWidth="4">
        <g className="drop-shadow-[0_0_2px_rgb(0_0_0/0.3)]">
          <path d="M18 5v44l38-18z" />
          <path d="M10 12H6v40l6 3M18 59l34-17" />
        </g>
      </svg>
      RUN
    </div>
  );
}

export default function App() {
  return (
    <div className={`relative flex h-screen flex-col overflow-hidden bg-white leading-[14px] ${tahoma}`}>
      <InternetExplorer />
      <Taskbar />
      <ChromeWindow />
      <ExplorerWindow />
      <Watermark />
    </div>
  );
}
